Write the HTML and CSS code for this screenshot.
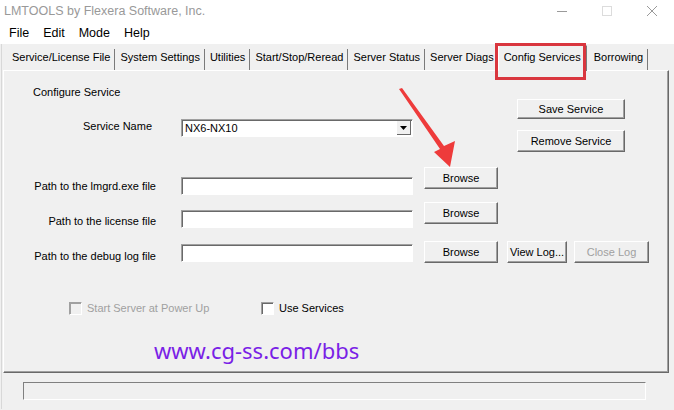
FILE: index.html
```html
<!DOCTYPE html>
<html lang="en">
<head>
    <meta charset="UTF-8">
    <title>LMTOOLS by Flexera Software, Inc.</title>
    <link rel="stylesheet" href="styles.css">
</head>
<body>

    <div class="titlebar">
        <span class="title">LMTOOLS by Flexera Software, Inc.</span>
        <div class="win-btns">
            <span class="win-btn">
                <svg width="10" height="10" viewBox="0 0 10 10"><path d="M0 5.5h10" stroke="#9a9a9a" stroke-width="1"/></svg>
            </span>
            <span class="win-btn">
                <svg width="10" height="10" viewBox="0 0 10 10"><rect x="0.5" y="0.5" width="9" height="9" fill="none" stroke="#dcdcdc"/></svg>
            </span>
            <span class="win-btn">
                <svg width="10" height="10" viewBox="0 0 10 10"><path d="M0 0L10 10M10 0L0 10" stroke="#9a9a9a" stroke-width="1"/></svg>
            </span>
        </div>
    </div>

    <div class="menubar">
        <span class="menu">File</span>
        <span class="menu">Edit</span>
        <span class="menu">Mode</span>
        <span class="menu">Help</span>
    </div>

    <div class="main">
        <div class="tabs">
            <span class="tab">Service/License File</span>
            <span class="tab">System Settings</span>
            <span class="tab">Utilities</span>
            <span class="tab">Start/Stop/Reread</span>
            <span class="tab">Server Status</span>
            <span class="tab">Server Diags</span>
            <span class="tab active">Config Services</span>
            <span class="tab">Borrowing</span>
        </div>

        <div class="panel">
            <div class="top">
                <div class="top-left">
                    <div class="caption">Configure Service</div>
                    <div class="row service-row">
                        <span class="label label-short">Service Name</span>
                        <div class="combo">
                            <span class="combo-text">NX6-NX10</span>
                            <span class="combo-btn">
                                <svg width="7" height="4" viewBox="0 0 7 4"><path d="M0 0h7L3.5 4z" fill="#000"/></svg>
                            </span>
                        </div>
                    </div>
                </div>
                <div class="top-right">
                    <button class="btn btn-wide btn-save">Save Service</button>
                    <button class="btn btn-wide btn-remove">Remove Service</button>
                </div>
            </div>

            <div class="row path-row row-lmgrd">
                <span class="label">Path to the lmgrd.exe file</span>
                <div class="textbox"></div>
                <button class="btn btn-browse">Browse</button>
            </div>

            <div class="row path-row row-license">
                <span class="label">Path to the license file</span>
                <div class="textbox"></div>
                <button class="btn btn-browse">Browse</button>
            </div>

            <div class="row path-row row-debug">
                <span class="label">Path to the debug log file</span>
                <div class="textbox"></div>
                <button class="btn btn-browse">Browse</button>
                <button class="btn btn-view">View Log...</button>
                <button class="btn btn-close disabled">Close Log</button>
            </div>

            <div class="checks">
                <label class="check check-power disabled"><span class="box"></span>Start Server at Power Up</label>
                <label class="check check-services"><span class="box"></span>Use Services</label>
            </div>

            <div class="watermark">www.cg-ss.com/bbs</div>
        </div>

        <div class="statusbar">
            <div class="status-box"></div>
        </div>
    </div>

    <!-- annotations drawn over the screenshot -->
    <div class="highlight"></div>
    <svg class="arrow" width="674" height="410" viewBox="0 0 674 410">
        <polygon points="399,89 402,88 444,146 455,141 450,167 434,152 440,149" fill="#ee3b3b"/>
    </svg>

</body>
</html>
```

FILE: styles.css
```css
body {
    margin: 0;
    width: 674px;
    height: 410px;
    background-color: #f0f0f0;
    font-family: "Liberation Sans", Arial, sans-serif;
    font-size: 11px;
    color: #000;
    position: relative;
    overflow: hidden;
}
.titlebar {
    height: 22px;
    background-color: #fff;
    display: flex;
    align-items: center;
    justify-content: space-between;
}
.title {
    font-size: 12.5px;
    color: #999;
    padding-left: 4px;
}
.win-btns {
    display: flex;
}
.win-btn {
    width: 45px;
    display: flex;
    justify-content: center;
}
.menubar {
    height: 22px;
    background-color: #fff;
    display: flex;
    align-items: center;
    padding-left: 2px;
    font-size: 12.5px;
}
.menu {
    padding: 0 7px;
}
.main {
    border-left: 1px solid #d8d8d8;
    margin-left: 1px;
}
.tabs {
    height: 26px;
    display: flex;
    align-items: flex-end;
    padding-left: 5px;
}
.tab {
    height: 21px;
    line-height: 17px;
    padding: 0 4px 0 5px;
    white-space: nowrap;
    border-right: 1px solid #7a7a7a;
    box-sizing: border-box;
}
.tab.active {
    height: 26px;
    line-height: 22px;
    padding: 0 5px;
    margin: 0 2px 0 -1px;
    background-color: #f0f0f0;
    border-top: 1px solid #fff;
    border-left: 1px solid #fff;
    border-right: 1px solid #7a7a7a;
    position: relative;
    top: 1px;
}
.panel {
    height: 303px;
    margin-left: 1px;
    margin-right: 5px;
    border-top: 1px solid #fff;
    border-left: 1px solid #fff;
    border-right: 1px solid #696969;
    border-bottom: 1px solid #696969;
    box-shadow: inset -1px -1px 0 #a0a0a0;
    box-sizing: border-box;
}
.top {
    display: flex;
    justify-content: space-between;
}
.caption {
    margin: 15px 0 0 29px;
    line-height: 13px;
}
.row {
    display: flex;
    align-items: flex-start;
}
.label {
    width: 152px;
    text-align: right;
    line-height: 13px;
    white-space: nowrap;
}
.label-short {
    width: 148px;
    padding-right: 4px;
}
.service-row {
    margin-top: 20px;
}
.service-row .label {
    margin-top: 1px;
}
.combo, .textbox {
    width: 232px;
    height: 18px;
    margin-left: 25px;
    background-color: #fff;
    border-top: 1px solid #a0a0a0;
    border-left: 1px solid #a0a0a0;
    border-right: 1px solid #fff;
    border-bottom: 1px solid #fff;
    box-shadow: inset 1px 1px 0 #696969;
    box-sizing: border-box;
}
.combo {
    display: flex;
    justify-content: space-between;
    align-items: center;
}
.combo-text {
    padding-left: 3px;
    line-height: 14px;
}
.combo-btn {
    width: 14px;
    height: 14px;
    margin-right: 1px;
    display: flex;
    align-items: center;
    justify-content: center;
    background-color: #f0f0f0;
    border-right: 1px solid #696969;
    border-bottom: 1px solid #696969;
    box-sizing: border-box;
}
.top-right {
    display: flex;
    flex-direction: column;
    margin-right: 43px;
}
.btn {
    font-family: inherit;
    font-size: 11px;
    color: #000;
    height: 22px;
    padding: 0;
    white-space: nowrap;
    background-color: #f0f0f0;
    border-top: 1px solid #fff;
    border-left: 1px solid #fff;
    border-right: 1px solid #696969;
    border-bottom: 1px solid #696969;
    box-shadow: inset -1px -1px 0 #a0a0a0;
    box-sizing: border-box;
}
.btn.disabled {
    color: #a0a0a0;
}
.btn-wide {
    width: 108px;
}
.btn-save {
    height: 20px;
    margin-top: 28px;
}
.btn-remove {
    margin-top: 11px;
}
.btn-browse {
    width: 74px;
    margin-left: 11px;
}
.btn-view {
    width: 60px;
    margin-left: 9px;
}
.btn-close {
    width: 75px;
    margin-left: 7px;
}
.row-lmgrd {
    margin-top: 15px;
}
.row-lmgrd .label {
    margin-top: 13px;
}
.row-lmgrd .textbox {
    margin-top: 10px;
}
.row-license {
    margin-top: 7px;
}
.row-license .label {
    margin-top: 13px;
}
.row-license .textbox {
    margin-top: 8px;
}
.row-debug {
    margin-top: 13px;
}
.row-debug .label {
    margin-top: 9px;
}
.row-debug .textbox {
    margin-top: 3px;
}
.checks {
    display: flex;
    align-items: center;
    margin-top: 38px;
    height: 14px;
}
.check {
    display: flex;
    align-items: center;
    line-height: 13px;
}
.check-power {
    margin-left: 65px;
    width: 192px;
}
.box {
    width: 13px;
    height: 13px;
    margin-right: 5px;
    background-color: #fff;
    border-top: 1px solid #a0a0a0;
    border-left: 1px solid #a0a0a0;
    border-right: 1px solid #fff;
    border-bottom: 1px solid #fff;
    box-shadow: inset 1px 1px 0 #696969;
    box-sizing: border-box;
}
.check.disabled {
    color: #a0a0a0;
}
.check.disabled .box {
    background-color: #f0f0f0;
    box-shadow: inset 1px 1px 0 #a0a0a0;
}
.watermark {
    margin: 21px 0 0 150px;
    font-family: "Noto Sans", "Open Sans", sans-serif;
    font-size: 22px;
    line-height: 28px;
    color: #7a1fe6;
}
.statusbar {
    height: 36px;
    padding: 9px 28px 0 21px;
    box-sizing: border-box;
}
.status-box {
    height: 18px;
    border-top: 1px solid #808080;
    border-left: 1px solid #808080;
    border-right: 1px solid #fff;
    border-bottom: 1px solid #fff;
    box-sizing: border-box;
}
.highlight {
    position: absolute;
    left: 495px;
    top: 43px;
    width: 91px;
    height: 37px;
    border: 3px solid #d9363e;
    box-sizing: border-box;
}
.arrow {
    position: absolute;
    left: 0;
    top: 0;
}
```
